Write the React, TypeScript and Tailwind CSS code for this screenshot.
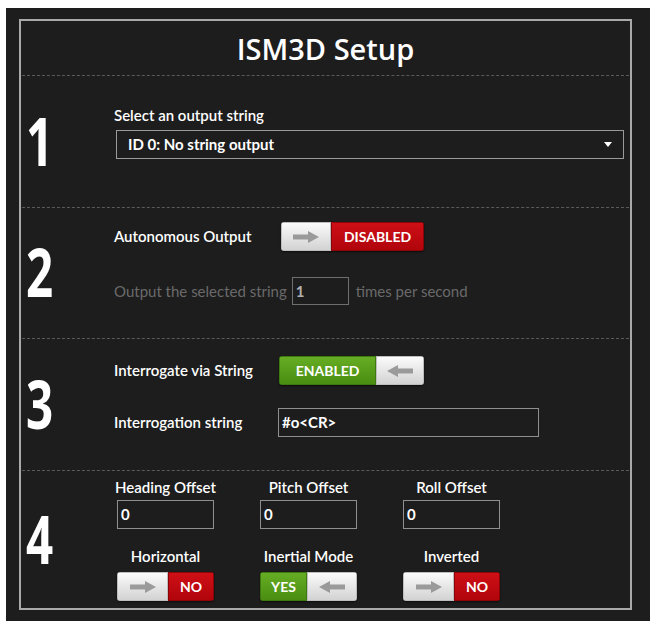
import React from "react";

const LBL = "font-['Lato','Liberation_Sans',sans-serif]";

function Arrow({ dir }: { dir: "right" | "left" }) {
  return (
    <svg width="26" height="12" viewBox="0 0 26 12" className={dir === "left" ? "-scale-x-100" : ""}>
      <polygon points="0,3.5 15,3.5 15,0 26,6 15,12 15,8.5 0,8.5" fill="#9a9a9a" />
    </svg>
  );
}

function Toggle({
  on,
  text,
  colorW,
  knobW,
  h = 29,
}: {
  on: boolean;
  text: string;
  colorW: number;
  knobW: number;
  h?: number;
}) {
  const knob = (
    <div
      className="flex items-center justify-center bg-gradient-to-b from-[#fbfbfb] to-[#d2d2d2] border border-[#bdbdbd]"
      style={{ width: knobW, height: h }}
    >
      <Arrow dir={on ? "left" : "right"} />
    </div>
  );
  const color = (
    <div
      className={
        "flex items-center justify-center text-white font-bold text-[14px] " +
        LBL +
        " " +
        (on
          ? "bg-gradient-to-b from-[#66ad24] to-[#4a8d10] border border-[#3f7a10]"
          : "bg-gradient-to-b from-[#cf0f16] to-[#b0050b] border border-[#8c0408]")
      }
      style={{ width: colorW, height: h }}
    >
      {text}
    </div>
  );
  return (
    <div className="flex rounded-[3px] overflow-hidden shadow-[0_1px_2px_rgba(0,0,0,0.6)]">
      {on ? (
        <>
          {color}
          {knob}
        </>
      ) : (
        <>
          {knob}
          {color}
        </>
      )}
    </div>
  );
}

function Digit({ n }: { n: string }) {
  return (
    <div className="w-[92px] shrink-0 self-stretch flex items-center pl-[4px] pb-[4px]">
      <span className="font-['Open_Sans',sans-serif] text-[66px] leading-none text-white font-bold inline-block origin-left scale-x-[0.72]">
        {n}
      </span>
    </div>
  );
}

function Box({ w, value }: { w: number; value: string }) {
  return (
    <div
      className={
        "h-[29px] border border-[#8f8f8f] flex items-center pl-[3px] text-white font-bold text-[15px] " + LBL
      }
      style={{ width: w }}
    >
      {value}
    </div>
  );
}

export default function App() {
  return (
    <div className="w-[660px] h-[630px] bg-white pt-[8px] pl-[6px]">
      <div className="w-[644px] h-[613px] bg-[#1d1d1d] pt-[11px] pl-[13px]">
        <div className="w-[613px] h-[591px] border-2 border-[#a9a9a9] flex flex-col">
          <div className="h-[54px] flex items-center justify-center">
            <span className="font-['Open_Sans',sans-serif] text-[29px] font-semibold text-white leading-none">
              ISM3D Setup
            </span>
          </div>

          {/* Section 1 */}
          <div className="h-[132px] mx-[1px] border-t border-dashed border-[#5a5a5a] flex">
            <Digit n="1" />
            <div className="pt-[31px] flex flex-col">
              <div className={"text-[15px] leading-[17px] font-semibold text-white " + LBL}>
                Select an output string
              </div>
              <div className="mt-[6px] ml-[2px] w-[508px] h-[29px] border border-[#9a9a9a] flex items-center justify-between pl-[11px] pr-[11px]">
                <span className={"text-[15px] font-bold text-white " + LBL}>ID 0: No string output</span>
                <svg width="8" height="5" viewBox="0 0 8 5">
                  <polygon points="0,0 8,0 4,5" fill="#ffffff" />
                </svg>
              </div>
            </div>
          </div>

          {/* Section 2 */}
          <div className="h-[131px] mx-[1px] border-t border-dashed border-[#5a5a5a] flex">
            <Digit n="2" />
            <div className="pt-[14px] flex flex-col">
              <div className="flex items-center">
                <div className={"w-[167px] text-[15px] font-semibold text-white " + LBL}>Autonomous Output</div>
                <Toggle on={false} text="DISABLED" knobW={50} colorW={93} />
              </div>
              <div className="mt-[26px] flex items-center">
                <span className={"text-[15px] text-[#6a6a6a] " + LBL}>Output the selected string</span>
                <div className="ml-[5px] w-[57px] h-[28px] border border-[#6f6f6f] flex items-center pl-[3px]">
                  <span className={"text-[15px] font-bold text-[#b0b0b0] " + LBL}>1</span>
                </div>
                <span className={"ml-[7px] text-[15px] text-[#6a6a6a] " + LBL}>times per second</span>
              </div>
            </div>
          </div>

          {/* Section 3 */}
          <div className="h-[132px] mx-[1px] border-t border-dashed border-[#5a5a5a] flex">
            <Digit n="3" />
            <div className="pt-[17px] flex flex-col">
              <div className="flex items-center">
                <div className={"w-[165px] text-[15px] font-semibold text-white " + LBL}>Interrogate via String</div>
                <Toggle on={true} text="ENABLED" knobW={48} colorW={97} />
              </div>
              <div className="mt-[23px] flex items-center">
                <div className={"w-[164px] text-[15px] font-semibold text-white " + LBL}>Interrogation string</div>
                <Box w={261} value="#o<CR>" />
              </div>
            </div>
          </div>

          {/* Section 4 */}
          <div className="flex-1 mx-[1px] border-t border-dashed border-[#5a5a5a] flex">
            <Digit n="4" />
            <div className="pt-[8px] pl-[3px] flex gap-[46px]">
              {[
                { l: "Heading Offset", b: "Horizontal", on: false },
                { l: "Pitch Offset", b: "Inertial Mode", on: true },
                { l: "Roll Offset", b: "Inverted", on: false },
              ].map((c) => (
                <div key={c.l} className="w-[97px] flex flex-col items-center">
                  <div className={"h-[16px] leading-[16px] text-[15px] font-semibold text-white whitespace-nowrap " + LBL}>
                    {c.l}
                  </div>
                  <div className="mt-[5px]">
                    <Box w={97} value="0" />
                  </div>
                  <div className={"mt-[19px] h-[16px] leading-[16px] text-[15px] font-semibold text-white whitespace-nowrap " + LBL}>
                    {c.b}
                  </div>
                  <div className="mt-[8px]">
                    {c.on ? (
                      <Toggle on={true} text="YES" colorW={47} knobW={50} />
                    ) : (
                      <Toggle on={false} text="NO" knobW={51} colorW={46} />
                    )}
                  </div>
                </div>
              ))}
            </div>
          </div>
        </div>
      </div>
    </div>
  );
}
